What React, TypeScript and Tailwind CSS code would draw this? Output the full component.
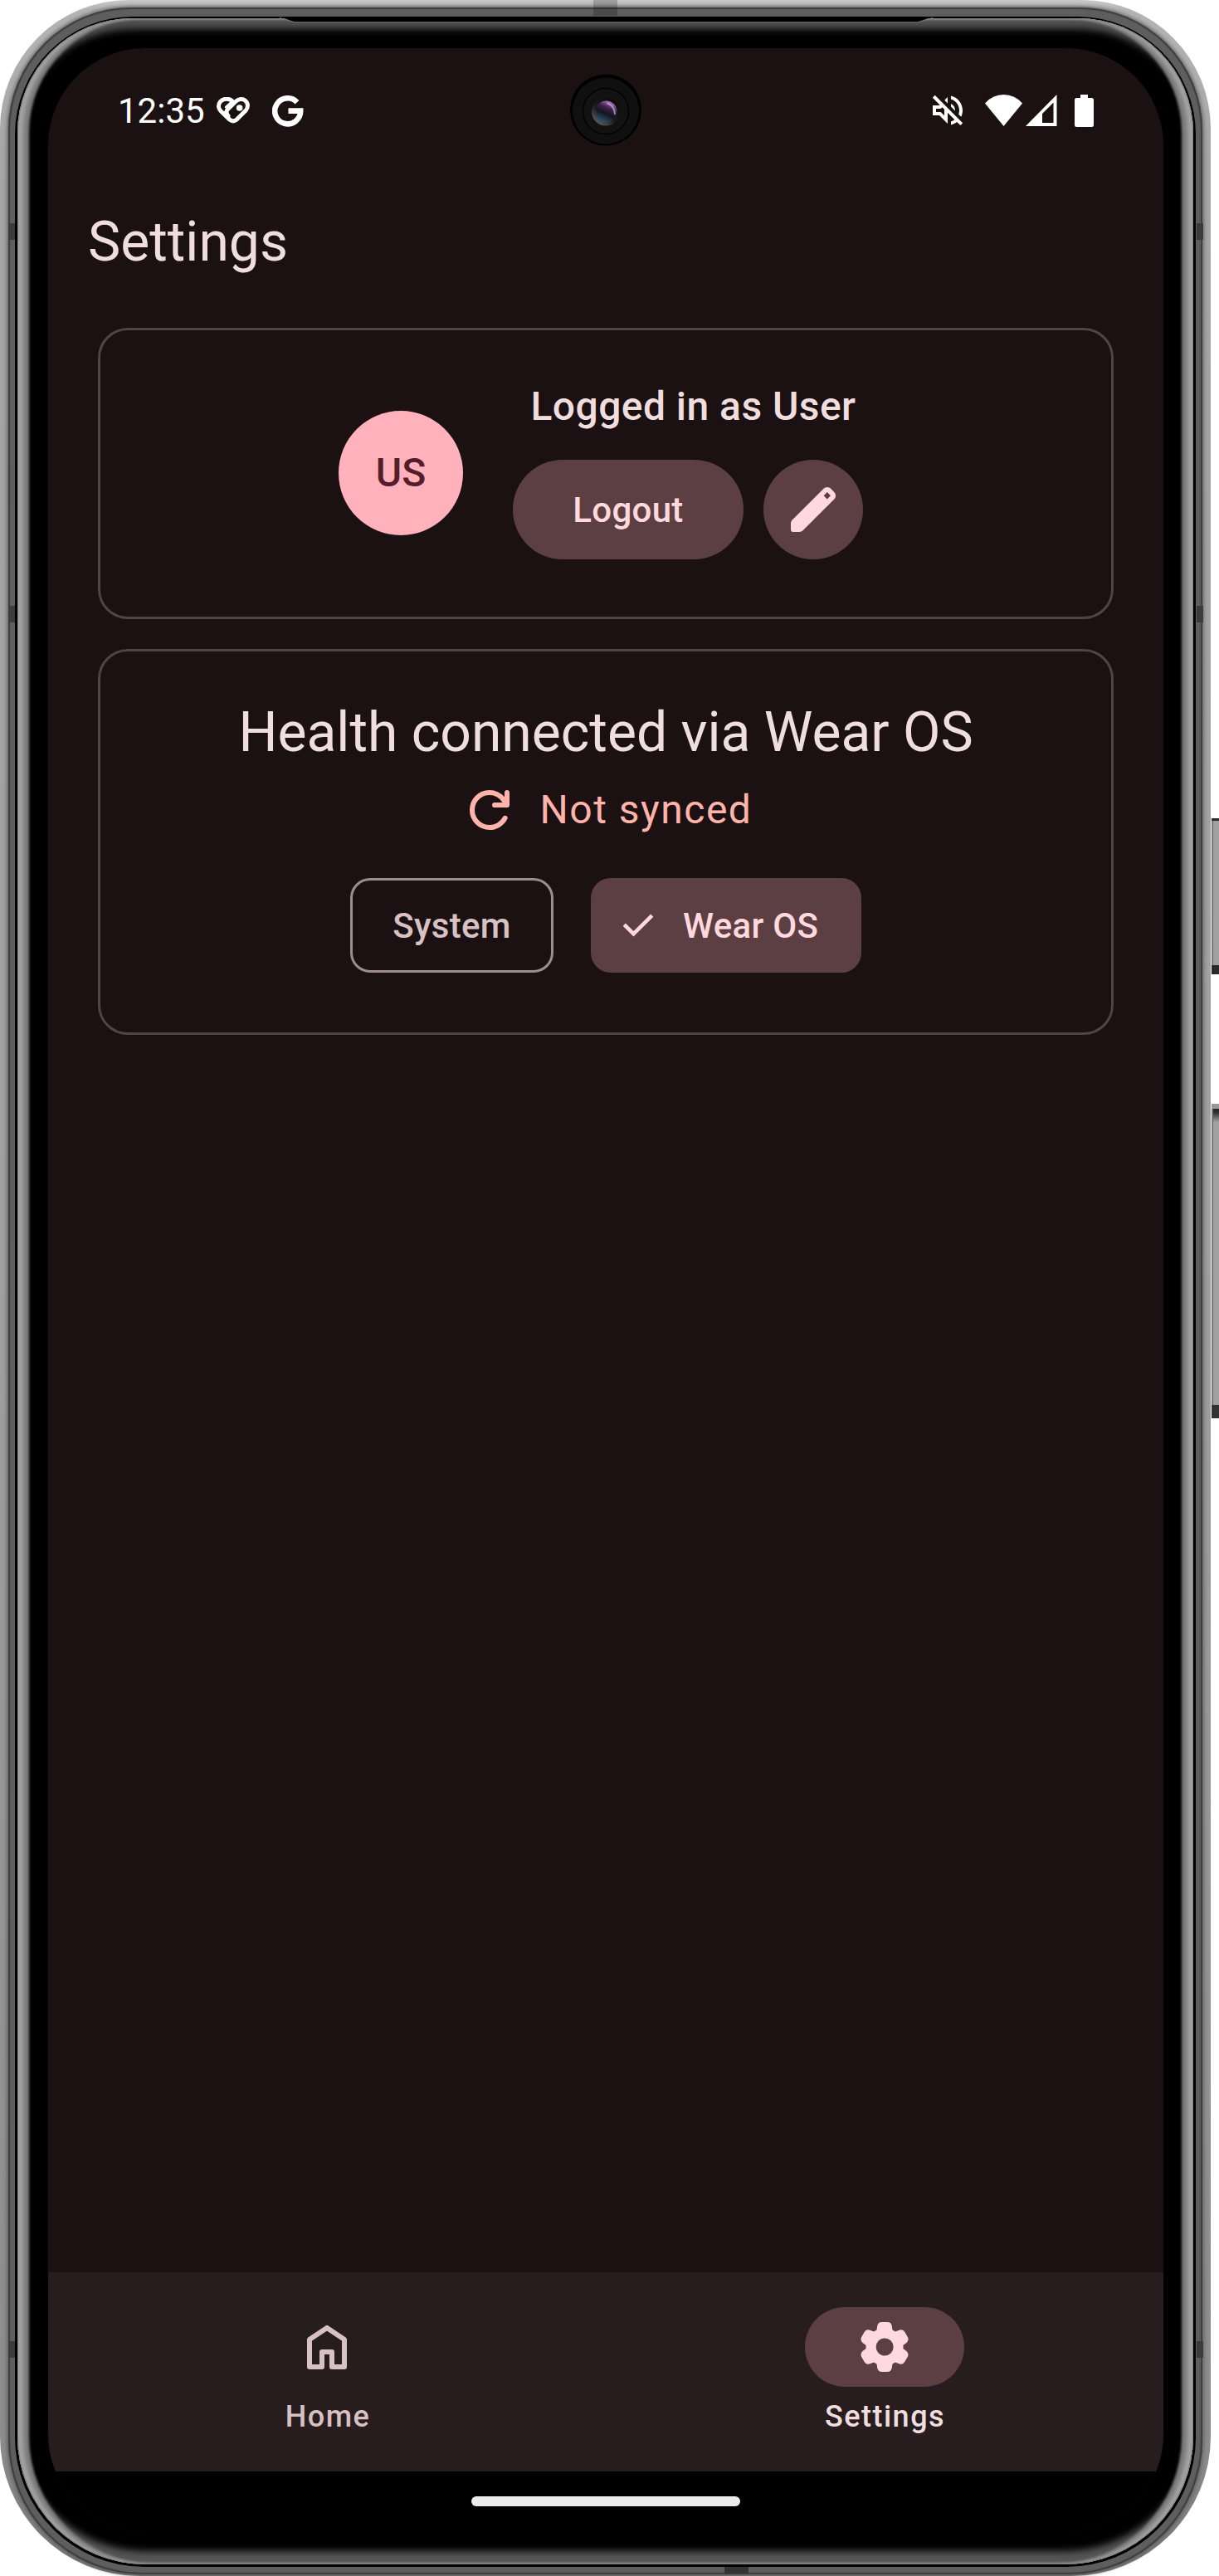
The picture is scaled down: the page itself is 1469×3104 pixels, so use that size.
import React from "react";
import { MdOutlineVolumeOff } from "react-icons/md";

function HealthIcon() {
  return (
    <svg width="40" height="32" viewBox="0 0 120 96" fill="none" stroke="#fff" strokeWidth="15" strokeLinejoin="round" strokeLinecap="round">
      <path d="M56 14 C44 3 24 4 13 17 C4 29 7 42 15 50 L48 82 Q60 91 72 82 L105 49 C115 38 115 22 104 13 C95 5 80 6 70 15 L41 43 C33 51 35 60 42 68" />
      <path d="M34 36 L53 19" strokeWidth="9" />
      <circle cx="83" cy="39" r="11.5" fill="#fff" stroke="none" />
    </svg>
  );
}

function GIcon() {
  return (
    <svg width="38" height="38" viewBox="0 0 38 38" fill="none" stroke="#fff" strokeWidth="6.6">
      <path d="M30 8.2 A15.5 15.5 0 1 0 34.2 18.6 H19.5" />
    </svg>
  );
}

function EditIcon() {
  return (
    <svg width="72" height="72" viewBox="0 -960 960 960" fill="#ffd9dd">
      <path d="M160-120q-17 0-28.5-11.5T120-160v-97q0-16 6-30.5t17-25.5l505-504q12-11 26.5-17t30.5-6q16 0 31 6t26 18l55 56q12 11 17.5 26t5.5 30q0 16-5.5 30.5T817-647L313-143q-11 11-25.5 17t-30.5 6h-97Zm544-528 56-56-56-56-56 56 56 56Z" />
    </svg>
  );
}

function RefreshIcon() {
  return (
    <svg width="72" height="72" viewBox="0 -960 960 960" fill="#ffb4ab">
      <path d="M480-160q-134 0-227-93t-93-227q0-134 93-227t227-93q69 0 132 28.5T720-690v-70q0-17 11.5-28.5T760-800q17 0 28.5 11.5T800-760v200q0 17-11.5 28.5T760-520H560q-17 0-28.5-11.5T520-560q0-17 11.5-28.5T560-600h128q-32-56-87.5-88T480-720q-100 0-170 70t-70 170q0 100 70 170t170 70q68 0 124.5-34.5T692-367q8-14 22.5-19.5t29.5-.5q16 5 23 21t-1 30q-41 80-117 128t-169 48Z" />
    </svg>
  );
}

function GearIcon() {
  return (
    <svg width="72" height="72" viewBox="0 -960 960 960" fill="#ffd9dd">
      <path d="M433-80q-27 0-46.5-18T363-142l-9-66q-13-5-24.5-12T307-235l-62 26q-25 11-50 2t-39-32l-47-82q-14-23-8-49t27-43l53-40q-1-7-1-13.5v-27q0-6.5 1-13.5l-53-40q-21-17-27-43t8-49l47-82q14-23 39-32t50 2l62 26q11-8 23-15t24-12l9-66q4-26 23.5-44t46.5-18h94q27 0 46.5 18t23.5 44l9 66q13 5 24.5 12t22.5 15l62-26q25-11 50-2t39 32l47 82q14 23 8 49t-27 43l-53 40q1 7 1 13.5v27q0 6.5-2 13.5l53 40q21 17 27 43t-8 49l-48 82q-14 23-39 32t-50-2l-60-26q-11 8-23 15t-24 12l-9 66q-4 26-23.5 44T527-80h-94Zm49-260q58 0 99-41t41-99q0-58-41-99t-99-41q-59 0-99.5 41T342-480q0 58 40.5 99t99.5 41Z" />
    </svg>
  );
}

function Camera() {
  return (
    <svg className="absolute left-[629px] top-[31px]" width="86" height="88" viewBox="0 0 86 88">
      <defs>
        <linearGradient id="lens" x1="0.75" y1="0.1" x2="0.35" y2="0.95">
          <stop offset="0" stopColor="#a06ab0" />
          <stop offset="0.3" stopColor="#3a2348" />
          <stop offset="0.6" stopColor="#16141f" />
          <stop offset="1" stopColor="#28506a" />
        </linearGradient>
        <linearGradient id="rim" x1="0.8" y1="0.1" x2="0.2" y2="0.9">
          <stop offset="0" stopColor="#0b0b0b" />
          <stop offset="0.6" stopColor="#1c1c1c" />
          <stop offset="1" stopColor="#5a5a5a" />
        </linearGradient>
      </defs>
      <circle cx="43" cy="43.5" r="43" fill="#000" />
      <circle cx="43" cy="44.5" r="40" fill="#101010" />
      <circle cx="43" cy="45" r="27.5" fill="#121212" stroke="#020202" strokeWidth="1.5" />
      <circle cx="43" cy="45.5" r="17" fill="url(#rim)" />
      <circle cx="43.5" cy="45.5" r="13" fill="url(#lens)" />
      <path d="M45 35.5 Q53 38 54 48" stroke="#c9b3e6" strokeWidth="2" fill="none" strokeLinecap="round" opacity="0.7" />
    </svg>
  );
}

function StatusBar() {
  return (
    <div className="relative flex h-[150px] shrink-0 items-center pl-[84px] pr-[84px]">
      <span className="w-[115px] pt-[2px] text-[42px] leading-[50px] text-white">12:35</span>
      <span className="ml-[4px]">
        <HealthIcon />
      </span>
      <span className="ml-[27px] pt-px">
        <GIcon />
      </span>
      <Camera />
      <div className="ml-auto flex items-center">
        <MdOutlineVolumeOff size={48} color="#fff" />
        <svg className="ml-[21px]" width="45" height="38" viewBox="0 0 45 38" fill="#fff">
          <path d="M0 10.5 Q9 0 22.5 0 Q36 0 45 10.5 L22.5 38 Z" />
        </svg>
        <svg className="ml-[4px]" width="38" height="38" viewBox="0 0 38 38" fill="#fff">
          <path fillRule="evenodd" d="M37.5 0 V38 H0 Z M33.5 9.5 L20 23 V34 H33.5 Z" />
        </svg>
        <svg className="ml-[21px]" width="23" height="39" viewBox="0 0 23 39" fill="#fff">
          <path d="M7 0 H16 V4 H20.5 Q23 4 23 6.5 V36.5 Q23 39 20.5 39 H2.5 Q0 39 0 36.5 V6.5 Q0 4 2.5 4 H7 Z" />
        </svg>
      </div>
    </div>
  );
}

function AccountCard() {
  return (
    <section className="flex h-[351px] items-center justify-center gap-[60px] rounded-[36px] border-[3px] border-[#524345]">
      <div className="mb-px flex size-[150px] items-center justify-center rounded-full bg-[#ffb2bc] text-[48px] font-medium text-[#561d28]">US</div>
      <div className="flex w-[434px] flex-col pb-[13px]">
        <h2 className="mb-[28px] pl-px text-center text-[48px] font-medium leading-[72px] tracking-[0.45px] text-[#f0dedf]">Logged in as User</h2>
        <div className="flex gap-6">
          <button className="h-[120px] w-[278px] rounded-full bg-[#5c3f43] text-[42px] font-medium tracking-[0.3px] text-[#ffd9dd]">Logout</button>
          <button className="flex size-[120px] items-center justify-center rounded-full bg-[#5c3f43]" aria-label="Edit">
            <EditIcon />
          </button>
        </div>
      </div>
    </section>
  );
}

function HealthCard() {
  return (
    <section className="flex h-[465px] flex-col items-center rounded-[36px] border-[3px] border-[#524345] pt-[56px]">
      <h2 className="text-[66px] leading-[84px] text-[#f0dedf]">Health connected via Wear OS</h2>
      <div className="mt-[15px] flex h-[72px] items-center gap-[25px] text-[#ffb4ab]">
        <RefreshIcon />
        <span className="text-[48px] leading-[72px] tracking-[1.5px]">Not synced</span>
      </div>
      <div className="mt-[46px] flex gap-[45px]">
        <button className="h-[114px] w-[245px] rounded-[24px] border-[3px] border-[#9f8c8e] text-[42px] font-medium tracking-[0.3px] text-[#d7c1c3]">System</button>
        <button className="flex h-[114px] w-[326px] items-center rounded-[24px] bg-[#5c3f43] pl-[30px] text-[42px] font-medium tracking-[0.3px] text-[#ffd9dd]">
          <svg width="54" height="54" viewBox="0 -960 960 960" fill="#ffd9dd">
            <path d="M382-240 154-468l57-57 171 171 367-367 57 57-424 424Z" />
          </svg>
          <span className="ml-[27px]">Wear OS</span>
        </button>
      </div>
    </section>
  );
}

function NavBar() {
  return (
    <nav className="flex h-[240px] shrink-0 bg-[#271d1f] pt-[42px]">
      <div className="flex flex-1 flex-col items-center">
        <div className="flex h-24 w-48 items-center justify-center">
          <svg width="72" height="72" viewBox="0 0 24 24" fill="none" stroke="#d7c1c3" strokeWidth="2" strokeLinejoin="round">
            <path d="M5 9 L12 4.3 L19 9 V20 H14 V14 H10 V20 H5 Z" />
          </svg>
        </div>
        <span className="mt-3 pl-[2px] text-[36px] font-medium leading-[48px] tracking-[1.5px] text-[#d7c1c3]">Home</span>
      </div>
      <div className="flex flex-1 flex-col items-center">
        <div className="flex h-24 w-48 items-center justify-center rounded-full bg-[#5c3f43]">
          <GearIcon />
        </div>
        <span className="mt-3 pl-px text-[36px] font-medium leading-[48px] tracking-[1.5px] text-[#f0dedf]">Settings</span>
      </div>
    </nav>
  );
}

export default function App() {
  return (
    <div className="relative h-[3104px] w-[1469px] overflow-hidden bg-white font-['Roboto',sans-serif]">
      {/* side buttons */}
      <div className="absolute left-[1460px] top-[986px] h-[188px] w-[12px] border-b-[11px] border-t-[3px] border-[#2b2b2b] bg-[#a0a0a0] shadow-[inset_2px_0_1px_#777]" />
      <div className="absolute left-[1460px] top-[1330px] h-[379px] w-[12px] border-b-[16px] border-t-[6px] border-b-[#333] border-t-[#999] bg-[linear-gradient(180deg,#222_0,#333_5px,#a0a0a0_16px)] shadow-[inset_2px_0_1px_#777]" />

      {/* metal frame, from the outer edge inwards */}
      <div className="h-full w-[1459px] rounded-t-[155px] rounded-b-[168px] bg-[linear-gradient(180deg,#c8c8c8_0,#b4b4b4_12px,#a6a6a6_200px,#a0a0a0_1500px,#8c8c8c_2950px,#777_3104px)] px-[10px] pb-[2px] pt-[9px]">
        <div className="h-full rounded-t-[148px] rounded-b-[162px] bg-[#5e5e5e] px-[8px] pb-[9px] pt-[11px] shadow-[0_0_5px_1px_#555,inset_0_0_1px_2px_#3e3e3e]">
          <div className="h-full rounded-t-[142px] rounded-b-[156px] bg-black px-[3px] pb-[3px] pt-[2px]">
            <div className="h-full rounded-t-[138px] rounded-b-[154px] bg-black pb-[40px] pl-[37px] pr-[36px] pt-[36px] shadow-[inset_0_0_0_1px_#808080,inset_7px_0_4px_0_#a2a2a2,inset_-7px_0_4px_0_#a2a2a2,inset_14px_0_3px_0_#7c7c7c,inset_-14px_0_3px_0_#7c7c7c,inset_0_13px_8px_0_#505050,inset_0_-16px_9px_0_#555]">
              <div className="flex h-full flex-col overflow-hidden rounded-[117px] bg-[#1b1112]">
                <StatusBar />
                <header className="flex h-[167px] shrink-0 items-center px-12">
                  <h1 className="text-[66px] leading-[84px] text-[#f0dedf]">Settings</h1>
                </header>
                <main className="flex grow flex-col gap-[36px] px-[60px] pt-[20px]">
                  <AccountCard />
                  <HealthCard />
                </main>
                <NavBar />
                <div className="flex h-[72px] shrink-0 justify-center bg-black pt-[30px]">
                  <div className="h-[12px] w-[324px] rounded-full bg-[#ececec]" />
                </div>
              </div>
            </div>
          </div>
        </div>
      </div>

      {/* earpiece slot and antenna bands */}
      <svg className="absolute left-[337px] top-[20px]" width="787" height="8" viewBox="0 0 787 8">
        <path d="M0 0 L18 6.5 H769 L787 0 Z" fill="#000" />
        <path d="M0 1.5 L18 7 H769 L787 1.5" fill="none" stroke="#777" strokeWidth="1" />
      </svg>
      <div className="absolute left-[715px] top-0 h-[19px] w-[29px] bg-black/20" />
      <div className="absolute left-[873px] top-[3093px] h-[8px] w-[29px] bg-[#333]" />
      {[
        "left-[10px] top-[269px]",
        "left-[10px] top-[730px]",
        "left-[10px] top-[2821px]",
        "left-[1442px] top-[269px]",
        "left-[1442px] top-[730px]",
        "left-[1442px] top-[2821px]",
      ].map((place) => (
        <div key={place} className={"absolute h-[20px] w-[8px] bg-[#3c3c3c] " + place} />
      ))}
    </div>
  );
}
